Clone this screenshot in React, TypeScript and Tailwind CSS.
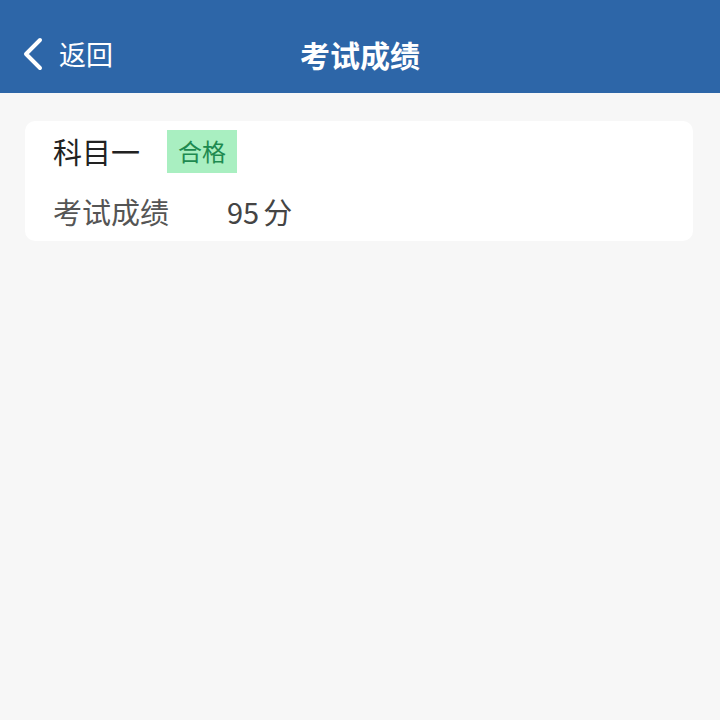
export default function App() {
  return (
    <div
      className="w-[720px] h-[720px] bg-[#f7f7f7] overflow-hidden"
      style={{ fontFamily: '"Noto Sans CJK SC", "Noto Sans", sans-serif' }}
    >
      {/* Header */}
      <div className="relative h-[93px] bg-[#2d66a8] flex items-center justify-center pt-[14px]">
        <div className="absolute left-[20px] top-[14px] bottom-0 flex items-center gap-[13px] text-white">
          <svg width="26" height="36" viewBox="0 0 26 36" fill="none">
            <path d="M20 4 L6 18 L20 32" stroke="white" strokeWidth="4" strokeLinecap="round" strokeLinejoin="round" />
          </svg>
          <span className="text-[27px] leading-none">返回</span>
        </div>
        <span className="text-white text-[30px] font-bold leading-none">考试成绩</span>
      </div>

      {/* Score card */}
      <div className="ml-[25px] mr-[27px] mt-[28px] h-[120px] bg-white rounded-[10px] pl-[28px] flex flex-col">
        <div className="flex items-center h-[60px]">
          <span className="text-[29px] text-[#222] leading-none">科目一</span>
          <span className="ml-[27px] h-[43px] px-[11px] flex items-center bg-[#a9efc1] text-[#1e8a50] text-[24px] leading-none">合格</span>
        </div>
        <div className="flex items-center h-[60px]">
          <span className="text-[29px] text-[#555] leading-none w-[174px]">考试成绩</span>
          <span className="text-[29px] text-[#444] leading-none flex items-center gap-[4px]">
            <span>95</span>
            <span>分</span>
          </span>
        </div>
      </div>
    </div>
  );
}
